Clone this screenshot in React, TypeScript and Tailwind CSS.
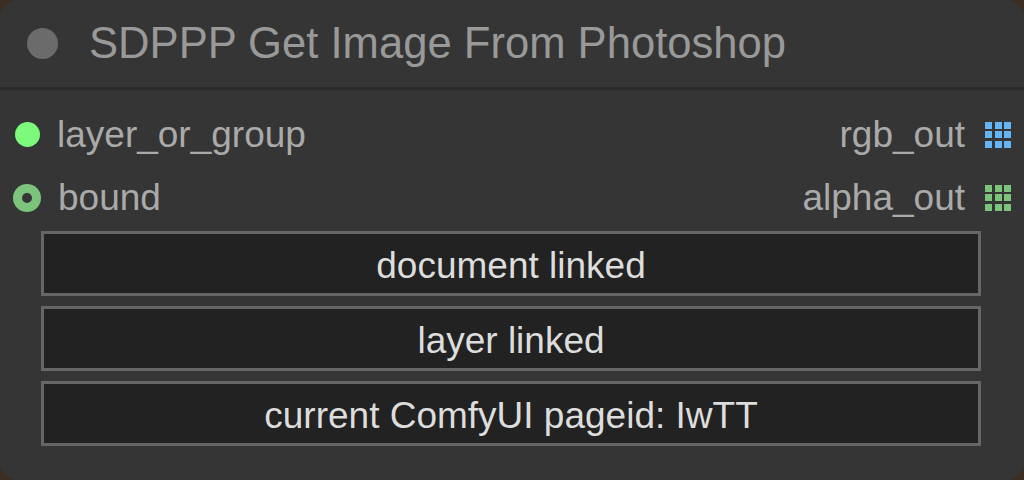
const SlotGrid = ({ color }: { color: string }) => (
  <div className="grid grid-cols-3 gap-[2.5px]">
    {Array.from({ length: 9 }).map((_, i) => (
      <div key={i} className={`w-[7px] h-[7px] ${color}`} />
    ))}
  </div>
);

const widgets = ["document linked", "layer linked", "current ComfyUI pageid: IwTT"];

const App = () => {
  return (
    <div className="w-[1024px] h-[480px] bg-[#3a2e22] overflow-hidden font-['Liberation_Sans',Arial,sans-serif]">
      <div className="w-full h-full rounded-[18px] bg-[#353535] flex flex-col">
        {/* header */}
        <div className="h-[90px] flex items-center pl-[27px] border-b-[3px] border-[#2b2b2b]">
          <div className="w-[31px] h-[31px] rounded-full bg-[#6b6b6b]" />
          <span className="ml-[31px] mt-[1px] text-[43.6px] leading-none text-[#999999]">
            SDPPP Get Image From Photoshop
          </span>
        </div>

        {/* slots */}
        <div className="pt-[13px] flex flex-col">
          <div className="h-[63px] flex items-center justify-between pl-[15px] pr-[13px]">
            <div className="flex items-center">
              <div className="w-[25px] h-[25px] rounded-full bg-[#7cfa7c]" />
              <span className="ml-[17px] text-[37px] leading-none text-[#aaaaaa]">layer_or_group</span>
            </div>
            <div className="flex items-center">
              <span className="mr-[20px] text-[37px] leading-none text-[#aaaaaa]">rgb_out</span>
              <SlotGrid color="bg-[#64b5f6]" />
            </div>
          </div>
          <div className="h-[63px] flex items-center justify-between pl-[13px] pr-[13px]">
            <div className="flex items-center">
              <div className="w-[28px] h-[28px] rounded-full bg-[#7cc47c] flex items-center justify-center">
                <div className="w-[10px] h-[10px] rounded-full bg-[#353535]" />
              </div>
              <span className="ml-[17px] text-[37px] leading-none text-[#aaaaaa]">bound</span>
            </div>
            <div className="flex items-center">
              <span className="mr-[20px] text-[37px] leading-none text-[#aaaaaa]">alpha_out</span>
              <SlotGrid color="bg-[#7cc47c]" />
            </div>
          </div>
        </div>

        {/* widgets */}
        <div className="mt-[2px] ml-[41px] mr-[43px] flex flex-col gap-[10px]">
          {widgets.map((w) => (
            <div
              key={w}
              className="h-[65px] pt-[4px] border-[3px] border-[#666666] bg-[#222222] flex items-center justify-center text-[37px] leading-none text-[#dddddd]"
            >
              {w}
            </div>
          ))}
        </div>
      </div>
    </div>
  );
};

export default App;
